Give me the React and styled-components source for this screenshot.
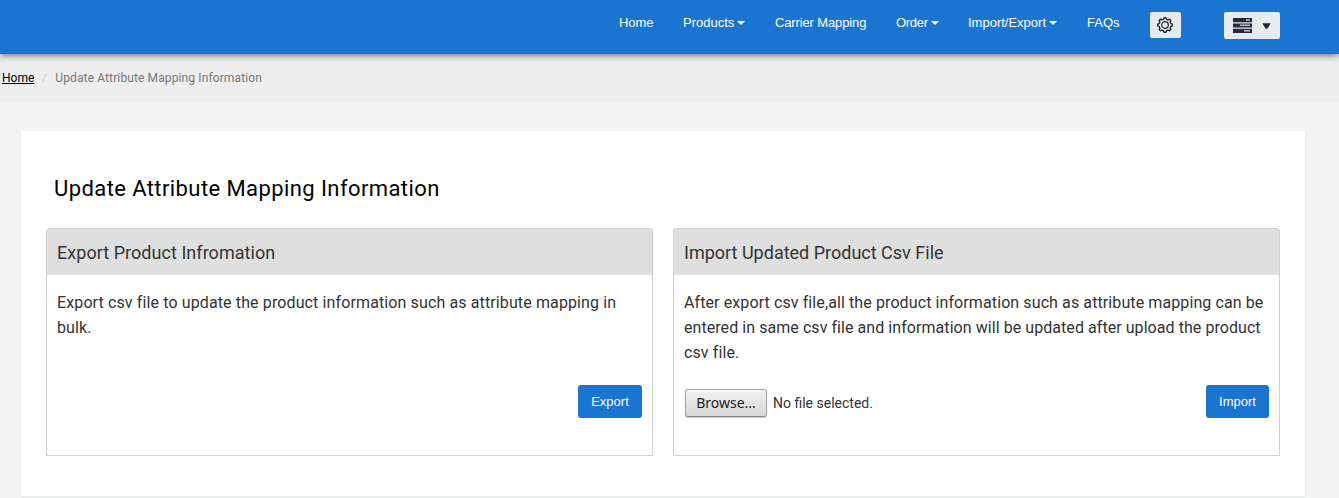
import React from 'react';
import styled, { createGlobalStyle } from 'styled-components';

const GlobalStyle = createGlobalStyle`
  * { box-sizing: border-box; }
  html, body { margin: 0; height: 100%; overflow: hidden; }
  body {
    background: #f4f4f4;
    color: #333;
    font-family: Roboto, "Noto Sans", sans-serif;
  }
`;

const Page = styled.div`
  height: 498px;
  overflow: hidden;
`;

const Header = styled.header`
  position: relative;
  display: flex;
  justify-content: flex-end;
  align-items: flex-start;
  height: 54px;
  padding: 12px 59px 0 0;
  background: #1b75d0;
  box-shadow: 0 1px 7px rgba(0, 0, 0, 0.6);
`;

const Nav = styled.nav`
  display: flex;
  gap: 30px;
  margin-right: 30px;
`;

const NavLink = styled.a`
  display: flex;
  align-items: center;
  height: 21px;
  color: #fff;
  font: 13px/21px "Liberation Sans", sans-serif;
  letter-spacing: ${({ $spacing }) => $spacing || 0}px;
  white-space: nowrap;
  width: ${({ $width }) => $width}px;
`;

const Caret = styled.span`
  margin-left: 3px;
  border: 4px solid transparent;
  border-top-color: #fff;
  border-bottom: 0;
`;

const ToolButton = styled.button`
  display: flex;
  align-items: center;
  justify-content: center;
  gap: 10px;
  width: ${({ $width }) => $width}px;
  height: ${({ $height }) => $height}px;
  margin: 0 0 0 ${({ $gap }) => $gap || 0}px;
  padding: ${({ $padding }) => $padding || '0 1px 1px 0'};
  border: 0;
  border-radius: 2px;
  background: #e6ebed;
`;

const Breadcrumb = styled.div`
  display: flex;
  height: 47px;
  padding: 15px 2px 0;
  background: #eee;
  color: #777;
  font-size: 12px;
  line-height: 18px;
`;

const Crumb = styled.a`
  color: #000;
  text-decoration: underline;
`;

const CurrentCrumb = styled.span`
  letter-spacing: 0.12px;
`;

const Separator = styled.span`
  width: 21px;
  text-align: center;
  color: #ccc;
`;

const Card = styled.main`
  width: 1284px;
  height: 365px;
  margin: 30px 0 0 21px;
  padding: 42px 25px 0;
  background: #fff;
  box-shadow: 0 1px 3px #dfe5e5;
`;

const Title = styled.h1`
  margin: 0 0 23px 8px;
  color: #000;
  font-size: 22px;
  font-weight: 400;
  line-height: 32px;
  letter-spacing: 0.41px;
`;

const Panels = styled.div`
  display: grid;
  grid-template-columns: 607px 607px;
  gap: 20px;
`;

const Panel = styled.section`
  display: flex;
  flex-direction: column;
  height: 228px;
  border: 1px solid #d0d2d2;
  border-radius: 3px 3px 0 0;
`;

const PanelTitle = styled.h2`
  height: 46px;
  margin: 0;
  padding: 0 10px;
  background: #dfdfdf;
  font-size: 18px;
  font-weight: 400;
  line-height: 47px;
  letter-spacing: ${({ $spacing }) => $spacing || 0}px;
`;

const PanelText = styled.p`
  height: 75px;
  margin: 15px 10px 20px;
  font-size: 16px;
  line-height: 25px;
  white-space: nowrap;
`;

const TextLine = styled.span`
  display: block;
  letter-spacing: ${({ $spacing }) => $spacing}px;
`;

const Actions = styled.div`
  display: flex;
  justify-content: space-between;
  padding: 0 10px 0 11px;
`;

const ActionButton = styled.button`
  width: ${({ $width }) => $width}px;
  height: 33px;
  margin-left: auto;
  padding: 0;
  border: 0;
  border-radius: 3px;
  background: #1b75d0;
  color: #fff;
  font: 13px "Liberation Sans", sans-serif;
`;

const FilePicker = styled.div`
  display: flex;
  align-items: center;
  gap: 6px;
  height: 28px;
  margin-top: 4px;
  font-size: 14px;
`;

const BrowseButton = styled.button`
  width: 82px;
  height: 28px;
  padding: 0 0 2px;
  border: 1px solid #a3a3a3;
  border-bottom-color: #858585;
  border-radius: 3px;
  background: linear-gradient(#f2f2f2, #d6d6d6);
  box-shadow: inset 0 1px #fff, 0 1px 1px #ccc;
  color: #222;
  font: 14px "Noto Sans", sans-serif;
`;

const gearPath = (() => {
  const points = [];
  for (let i = 0; i < 80; i += 1) {
    const angle = (i / 80) * Math.PI * 2;
    const radius = 6.6 + 0.7 * Math.tanh(2.5 * Math.cos(angle * 8));
    points.push(`${(8 + radius * Math.sin(angle)).toFixed(2)} ${(8 - radius * Math.cos(angle)).toFixed(2)}`);
  }
  return `M${points.join('L')}Z`;
})();

const GearIcon = () => (
  <svg width="16" height="16" viewBox="0 0 16 16" fill="none" stroke="#202228" strokeWidth="1.4">
    <path d={gearPath} />
    <circle cx="8" cy="8" r="3.3" strokeWidth="1.2" />
  </svg>
);

const ServerIcon = () => (
  <svg width="19" height="15" viewBox="0 0 19 15">
    <path fill="#25283a" d="M0 0h19v4.2H0zM0 5.4h19v4.2H0zM0 10.8h19V15H0z" />
    <path fill="#b9bcc5" d="M13 1.2h4v1.6h-4zM7 6.6h10v1.5H7zM11 12h6v1.5h-6z" />
  </svg>
);

const DownIcon = () => (
  <svg width="9" height="6" viewBox="0 0 9 6">
    <path fill="#25283a" d="M.3.3h8.4L5.4 5.7H3.6z" />
  </svg>
);

const links = [
  { label: 'Home', width: 34, spacing: -0.1 },
  { label: 'Products', width: 62, menu: true },
  { label: 'Carrier Mapping', width: 91, spacing: -0.13 },
  { label: 'Order', width: 42, menu: true, spacing: -0.3 },
  { label: 'Import/Export', width: 89, menu: true },
  { label: 'FAQs', width: 33 },
];

export default function App() {
  return (
    <Page>
      <GlobalStyle />
      <Header>
        <Nav>
          {links.map(({ label, width, menu, spacing }) => (
            <NavLink key={label} $width={width} $spacing={spacing}>
              {label}
              {menu && <Caret />}
            </NavLink>
          ))}
        </Nav>
        <ToolButton $width={31} $height={26} aria-label="Settings"><GearIcon /></ToolButton>
        <ToolButton $width={56} $height={27} $gap={43} $padding="0" aria-label="Menu">
          <ServerIcon />
          <DownIcon />
        </ToolButton>
      </Header>
      <Breadcrumb>
        <Crumb>Home</Crumb>
        <Separator>/</Separator>
        <CurrentCrumb>Update Attribute Mapping Information</CurrentCrumb>
      </Breadcrumb>
      <Card>
        <Title>Update Attribute Mapping Information</Title>
        <Panels>
          <Panel>
            <PanelTitle $spacing={0.04}>Export Product Infromation</PanelTitle>
            <PanelText>
              <TextLine $spacing={0.12}>Export csv file to update the product information such as attribute mapping in</TextLine>
              <TextLine $spacing={0.1}>bulk.</TextLine>
            </PanelText>
            <Actions>
              <ActionButton $width={64}>Export</ActionButton>
            </Actions>
          </Panel>
          <Panel>
            <PanelTitle>Import Updated Product Csv File</PanelTitle>
            <PanelText>
              <TextLine $spacing={0.1}>After export csv file,all the product information such as attribute mapping can be</TextLine>
              <TextLine $spacing={0.06}>entered in same csv file and information will be updated after upload the product</TextLine>
              <TextLine $spacing={0.1}>csv file.</TextLine>
            </PanelText>
            <Actions>
              <FilePicker>
                <BrowseButton>Browse...</BrowseButton>
                <span>No file selected.</span>
              </FilePicker>
              <ActionButton $width={63}>Import</ActionButton>
            </Actions>
          </Panel>
        </Panels>
      </Card>
    </Page>
  );
}
